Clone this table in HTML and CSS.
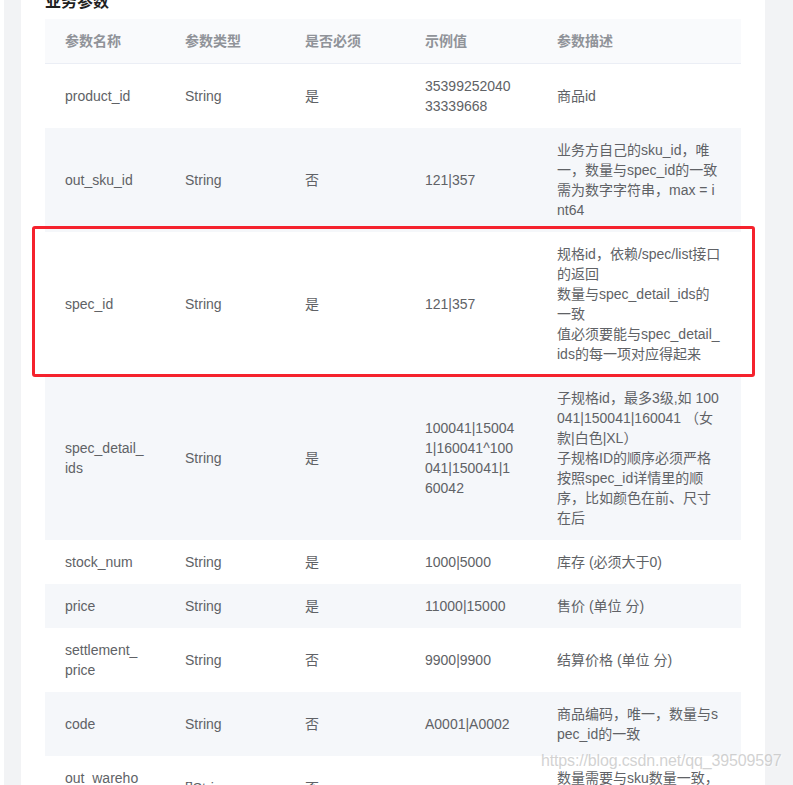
FILE: index.html
```html
<!DOCTYPE html>
<html>
<head>
<meta charset="utf-8">
<title>业务参数</title>
<link rel="stylesheet" href="styles.css">
</head>
<body>
<div class="shell">
<div class="panel">
<h3 class="sec-title">业务参数</h3>

<table class="params">
<colgroup>
<col class="c-name"><col class="c-type"><col class="c-req"><col class="c-ex"><col class="c-desc">
</colgroup>
<thead>
<tr><th>参数名称</th><th>参数类型</th><th>是否必须</th><th>示例值</th><th>参数描述</th></tr>
</thead>
<tbody>
<tr><td>product_id</td><td>String</td><td>是</td><td>3539925204033339668</td><td>商品id</td></tr>
<tr><td>out_sku_id</td><td>String</td><td>否</td><td>121|357</td><td>业务方自己的sku_id，唯一，数量与spec_id的一致需为数字字符串，max = int64</td></tr>
<tr><td>spec_id</td><td>String</td><td>是</td><td>121|357</td><td>规格id，依赖/spec/list接口的返回<br>数量与spec_detail_ids的一致<br>值必须要能与spec_detail_ids的每一项对应得起来</td></tr>
<tr><td>spec_detail_ids</td><td>String</td><td>是</td><td>100041|150041|160041^100041|150041|160042</td><td>子规格id，最多3级,如 100041|150041|160041 （女款|白色|XL）<br>子规格ID的顺序必须严格按照spec_id详情里的顺序，比如颜色在前、尺寸在后</td></tr>
<tr><td>stock_num</td><td>String</td><td>是</td><td>1000|5000</td><td>库存 (必须大于0)</td></tr>
<tr><td>price</td><td>String</td><td>是</td><td>11000|15000</td><td>售价 (单位 分)</td></tr>
<tr><td>settlement_price</td><td>String</td><td>否</td><td>9900|9900</td><td>结算价格 (单位 分)</td></tr>
<tr><td>code</td><td>String</td><td>否</td><td>A0001|A0002</td><td>商品编码，唯一，数量与spec_id的一致</td></tr>
<tr><td>out_warehouse_id</td><td>[]String</td><td>否</td><td></td><td>数量需要与sku数量一致，仓库编码</td></tr>
</tbody>
</table>

<div class="mark-box"></div>
<div class="watermark">https://blog.csdn.net/qq_39509597</div>
</div>
</div>
</body>
</html>
```

FILE: styles.css
```css
/* API parameter table */

body
{ margin: 0;
background-color: #f2f3f5;
font-family: "Liberation Sans", "Noto Sans CJK SC", sans-serif;
font-size: 14px;
color: #606266;
overflow: hidden;
}

div.shell
{ border-left: 4px solid #fff;
padding-left: 17px;
}

div.panel
{ position: relative;
display: flow-root;
width: 696px;
padding: 0 24px 0 24px;
background-color: #fff;
}

h3.sec-title
{ margin: -10px 0 5px 0;
font-size: 16px;
line-height: 24px;
font-weight: bold;
color: #1f1f1f;
}

table.params
{ width: 696px;
border-collapse: collapse;
table-layout: fixed;
}

col.c-name, col.c-type, col.c-req
{ width: 120px;
}

col.c-ex
{ width: 132px;
}

col.c-desc
{ width: 204px;
}

table.params th
{ text-align: left;
font-weight: bold;
color: #909399;
background-color: #f9fafc;
border-bottom: 1px solid #ebeef5;
padding: 12px 20px 12px 20px;
line-height: 20px;
}

table.params td
{ padding: 12px 20px;
line-height: 20px;
vertical-align: middle;
word-break: break-all;
}

table.params tbody tr:nth-child(even) td
{ background-color: #f5f7fa;
}

/* Overlays */

div.mark-box
{ position: absolute;
left: 11px;
top: 226px;
width: 723px;
height: 151px;
box-sizing: border-box;
border: 3px solid #f5222d;
border-radius: 3px;
}

div.watermark
{ position: absolute;
left: 520px;
top: 752px;
font-size: 16px;
letter-spacing: -0.15px;
color: rgba(190, 190, 190, 0.7);
text-shadow: 1px 1px 1px rgba(255, 255, 255, 0.6);
white-space: nowrap;
}
```
